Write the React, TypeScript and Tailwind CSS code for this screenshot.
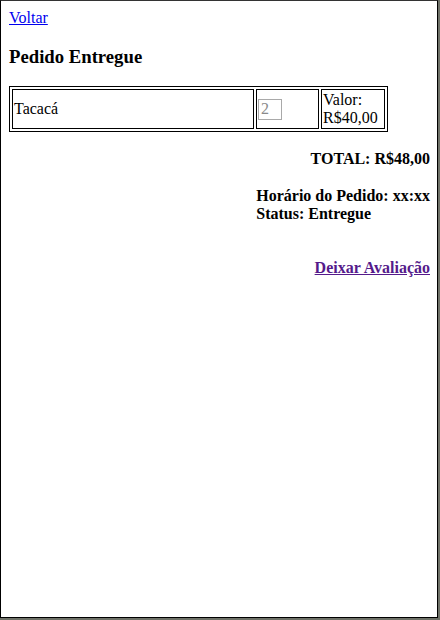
export default function App() {
  return (
    <div className="w-[440px] h-[620px] bg-[#6f7268]">
      <div className="w-[438px] h-[618px] bg-white border border-black border-t-[#333] pt-2 pb-2 pl-2 pr-[7px] font-['Liberation_Serif',serif] text-[16px] leading-[normal] text-black">
        <a href="#" className="text-[#0000ee] underline">
          Voltar
        </a>
        <h3 className="mt-[18.72px] mb-[18.72px] text-[18.72px] font-bold leading-[normal]">
          Pedido Entregue
        </h3>
        <table className="border-separate border-spacing-[2px] border border-black">
          <tbody>
            <tr>
              <td className="w-[242px] border border-black p-[1px] align-middle">Tacacá</td>
              <td className="w-[63px] border border-black p-[1px] align-middle">
                <input
                  type="text"
                  value="2"
                  disabled
                  readOnly
                  className="w-[24px] h-[21px] border border-[#a9a9a9] bg-white px-[2px] py-0 text-[16px] leading-[normal] text-[#8a8a8a] font-['Liberation_Serif',serif]"
                />
              </td>
              <td className="w-[64px] border border-black p-[1px] align-middle">
                Valor:
                <br />
                R$40,00
              </td>
            </tr>
          </tbody>
        </table>
        <p className="mt-[18px] text-right font-bold">TOTAL: R$48,00</p>
        <div className="mt-[19px] flex justify-end">
          <p className="text-left font-bold">
            Horário do Pedido: xx:xx
            <br />
            Status: Entregue
          </p>
        </div>
        <div className="mt-[36px] text-right">
          <a href="#" className="font-bold text-[#551a8b] underline">
            Deixar Avaliação
          </a>
        </div>
      </div>
    </div>
  );
}
